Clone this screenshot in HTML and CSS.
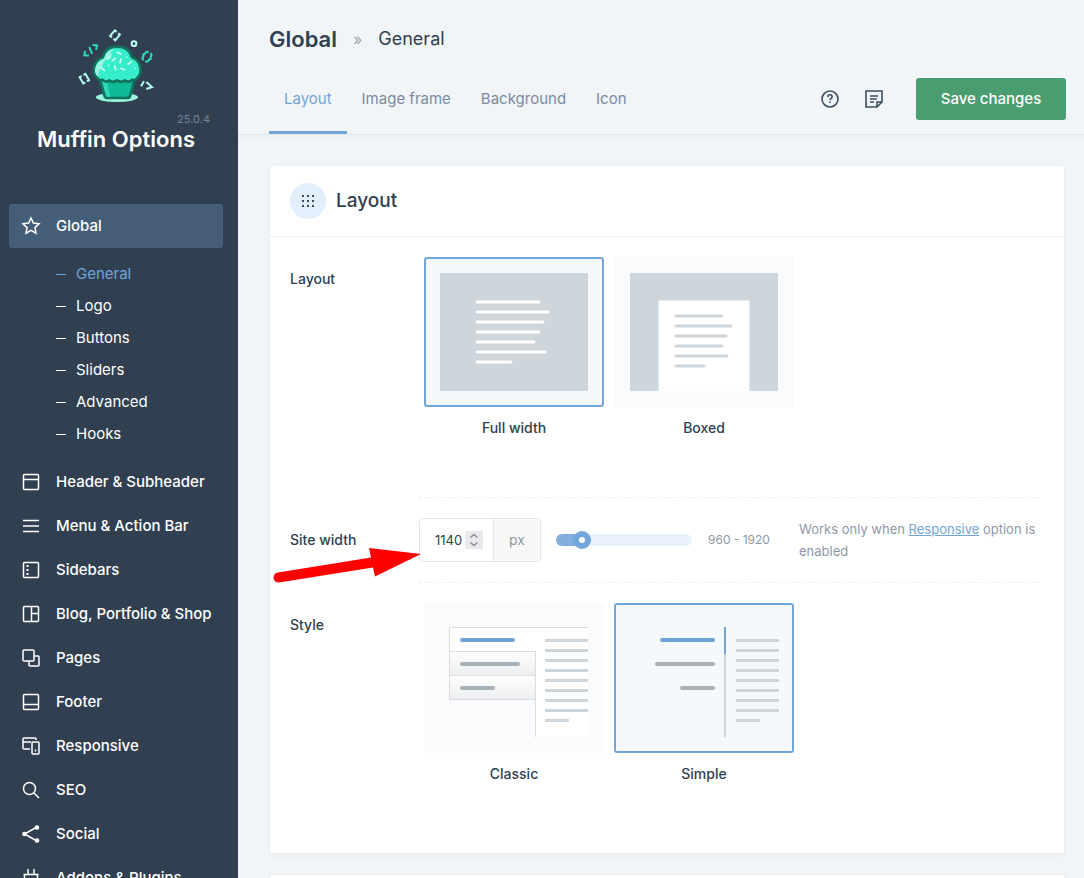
FILE: index.html
```html
<!DOCTYPE html>
<html lang="en">
<head>
<meta charset="utf-8">
<title>Muffin Options</title>
<link rel="stylesheet" href="styles.css">
</head>
<body>
<div class="app">
  <aside class="sidebar">
    <div class="brand">
      <svg class="brand-logo" viewBox="18 24 240 228" aria-hidden="true">
        <ellipse cx="141" cy="232" rx="63" ry="14" fill="#97f5e0"/>
        <path d="M89 172h106l-14 54q-2 8-10 8h-58q-8 0-10-8z" fill="#0eba98" stroke="#12705c" stroke-width="8" stroke-linejoin="round"/>
        <path d="M95 178h14l12 52h-11q-6-16-15-52z" fill="#2fd9b8"/>
        <path d="M84 176Q66 160 73 138 80 118 98 112 106 80 141 80 178 80 186 112 204 118 210 138 217 160 200 176 196 182 186 179 176 190 164 181 152 190 141 181 130 190 118 181 108 190 97 179 88 182 84 176z" fill="#36eecb" stroke="#12705c" stroke-width="8" stroke-linejoin="round"/>
        <path d="M86 172Q68 156 79 137 86 120 103 116 108 88 136 86 118 96 120 111 98 122 96 142 82 156 86 172z" fill="#98f7e3"/>
        <g stroke="#d3fff5" stroke-width="5" stroke-linecap="round">
          <path d="m141 97 12 5M112 117l9-6M127 122l9-7M153 117l-3 11M175 132l9-7M93 142l10 9M134 138l3 11M153 145l11 4M123 104h0M170 111h0M116 136h0M195 145h0"/>
        </g>
        <g fill="none" stroke="#b7fff0" stroke-width="6">
          <circle cx="192" cy="71" r="7"/>
          <path transform="translate(135 46) rotate(40)" d="M-3-11h-7v22h7M3-11h7v22h-7"/>
          <path transform="translate(43 176) rotate(-30)" d="M-3-11h-7v22h7M3-11h7v22h-7"/>
          <path d="m222 184-9 15M229 186l17 15-17 6"/>
        </g>
        <g fill="none" stroke="#2fdcbc" stroke-width="6">
          <path transform="translate(62 91) rotate(-38)" d="m-14-9-10 9 10 9M3-11l-6 22M14-9l10 9-10 9"/>
          <path transform="translate(231 110) rotate(32)" d="M-3-14q-7 0-7 7v3l-3 4 3 4v3q0 7 7 7M3-14q7 0 7 7v3l3 4-3 4v3q0 7-7 7"/>
        </g>
      </svg>
      <span class="brand-version">25.0.4</span>
      <strong class="brand-name">Muffin Options</strong>
    </div>
    <nav class="nav">
      <a class="nav-item is-active" href="#"><svg viewBox="0 0 18 18"><path d="m9 1 2.400 5.100 5.600.7-4.100 3.800 1.100 5.600L9 13.400l-5 2.800 1.100-5.600L1 6.800l5.600-.7z"/></svg>Global</a>
      <div class="subnav">
        <a class="subnav-item is-current" href="#">General</a>
        <a class="subnav-item" href="#">Logo</a>
        <a class="subnav-item" href="#">Buttons</a>
        <a class="subnav-item" href="#">Sliders</a>
        <a class="subnav-item" href="#">Advanced</a>
        <a class="subnav-item" href="#">Hooks</a>
      </div>
      <a class="nav-item" href="#"><svg viewBox="0 0 18 18"><rect x="1.500" y="1.500" width="15" height="15" rx="1"/><path d="M1.500 6.500h15"/></svg>Header &amp; Subheader</a>
      <a class="nav-item" href="#"><svg viewBox="0 0 18 18"><path d="M1 3.500h16M1 9h16M1 14.500h16"/></svg>Menu &amp; Action Bar</a>
      <a class="nav-item" href="#"><svg viewBox="0 0 18 18"><rect x="1.500" y="1.500" width="15" height="15" rx="1"/><path d="M5.500 4v10" stroke-width="2" stroke-dasharray="2 2"/></svg>Sidebars</a>
      <a class="nav-item" href="#"><svg viewBox="0 0 18 18"><rect x="1.500" y="1.500" width="15" height="15" rx="1"/><path d="M9.500 1.500v15M9.500 8.500h7"/></svg>Blog, Portfolio &amp; Shop</a>
      <a class="nav-item" href="#"><svg viewBox="0 0 18 18"><rect x="1" y="1" width="11" height="11" rx="1"/><path d="M12.500 7H16q1 0 1 1v8q0 1-1 1H8q-1 0-1-1v-4"/></svg>Pages</a>
      <a class="nav-item" href="#"><svg viewBox="0 0 18 18"><rect x="1.500" y="1.500" width="15" height="15" rx="1"/><path d="M1.500 11.500h15"/></svg>Footer</a>
      <a class="nav-item" href="#"><svg viewBox="0 0 18 18"><path d="M14 3V2q0-1-1-1H2Q1 1 1 2v9q0 1 1 1h6M1 5h8"/><rect x="10" y="5" width="7" height="12" rx="1"/><path d="M13.500 12.500v2"/></svg>Responsive</a>
      <a class="nav-item" href="#"><svg viewBox="0 0 18 18"><circle cx="7.500" cy="7.500" r="6"/><path d="m12 12 5 5"/></svg>SEO</a>
      <a class="nav-item" href="#"><svg viewBox="0 0 18 18"><path d="M15 2 2.500 9 15 16"/><g fill="currentColor"><circle cx="15" cy="2.500" r="1.600"/><circle cx="2.500" cy="9" r="1.600"/><circle cx="15" cy="15.500" r="1.600"/></g></svg>Social</a>
      <a class="nav-item" href="#"><svg viewBox="0 0 18 18"><path d="M6 0v5M12 0v5M1.500 5.500h15M2.500 5.500V12q0 3 3 3h7q3 0 3-3V5.500"/></svg>Addons &amp; Plugins</a>
    </nav>
  </aside>

  <main class="main">
    <header class="topbar">
      <div class="crumbs">
        <h1>Global</h1><span class="crumb-sep">»</span><span class="crumb">General</span>
      </div>
      <div class="toolbar">
        <nav class="tabs">
          <a class="tab is-active" href="#">Layout</a>
          <a class="tab" href="#">Image frame</a>
          <a class="tab" href="#">Background</a>
          <a class="tab" href="#">Icon</a>
        </nav>
        <div class="actions">
          <button class="icon-button" type="button" aria-label="Help"><svg viewBox="0 0 20 20"><circle cx="10" cy="10" r="8"/><path d="M7.900 8q0-2.200 2.100-2.200T12.100 8q0 1-1 1.500T10 11.200M10 12.500V14"/></svg></button>
          <button class="icon-button" type="button" aria-label="Notes"><svg viewBox="0 0 20 20"><path d="M2 2h16v11l-5 5H2zM18 13h-5v5"/><path d="M6 7h8M6 10h7M6 13h4"/></svg></button>
          <button class="save" type="button">Save changes</button>
        </div>
      </div>
    </header>

    <div class="content">
      <section class="card">
        <div class="card-head">
          <span class="card-icon"><svg viewBox="0 0 12 12"><path d="M0 1h12M0 6h12M0 11h12" stroke-dasharray="2 3"/></svg></span>
          <h2>Layout</h2>
        </div>

        <div class="row" role="radiogroup" aria-labelledby="layout-label">
          <span class="row-label" id="layout-label">Layout</span>
          <div class="options">
            <label class="option">
              <input type="radio" name="layout" checked>
              <span class="tile"><svg viewBox="0 0 148 118">
                <rect width="148" height="118" rx="1" fill="#ced5db"/>
                <path d="M37 29h62M37 39h71M37 49h66M37 59h62M37 69h57M37 79h68M37 89h34" stroke="#fff" stroke-width="3" stroke-linecap="round"/>
              </svg></span>
              <span class="option-name">Full width</span>
            </label>
            <label class="option">
              <input type="radio" name="layout">
              <span class="tile"><svg viewBox="0 0 148 118">
                <rect width="148" height="118" rx="1" fill="#ced5db"/>
                <path d="M28.500 118V27.500h91V118z" fill="#fff"/>
                <path d="M46 43h46M46 53h55M46 63h50M46 73h46M46 83h51M46 93h28" stroke="#ced5db" stroke-width="3" stroke-linecap="round"/>
              </svg></span>
              <span class="option-name">Boxed</span>
            </label>
          </div>
        </div>

        <div class="row row-width">
          <label class="row-label" for="site-width">Site width</label>
          <div class="width-control">
            <div class="field">
              <input id="site-width" type="number" value="1140">
              <svg class="stepper" viewBox="0 0 18 18" aria-hidden="true"><path d="m5.500 6.500 3.500-3 3.500 3M5.500 11.500l3.500 3 3.500-3"/></svg>
              <span class="unit">px</span>
            </div>
            <div class="slider"><input type="range" min="960" max="1920" value="1140" aria-label="Site width"></div>
            <span class="range-text">960 - 1920</span>
            <p class="hint">Works only when <a href="#">Responsive</a> option is enabled</p>
          </div>
          <svg class="pointer" viewBox="0 0 150 36" aria-hidden="true"><path d="M5 25.500 98 10.500 96 1l52 6-46 22.500-2-9L6 35.500a5 5 0 0 1-1-10z" fill="#fe0000"/></svg>
        </div>

        <div class="row" role="radiogroup" aria-labelledby="style-label">
          <span class="row-label" id="style-label">Style</span>
          <div class="options">
            <label class="option">
              <input type="radio" name="style">
              <span class="tile"><svg viewBox="0 0 148 118">
                <defs><linearGradient id="fade" x2="0" y2="1"><stop stop-color="#fff"/><stop offset="1" stop-color="#eceeef"/></linearGradient></defs>
                <path d="M9.500 8.500H148V118H95.500V32.500h-86z" fill="#fff"/>
                <rect x="9.500" y="32.500" width="86" height="24" fill="url(#fade)"/>
                <rect x="9.500" y="56.500" width="86" height="24" fill="url(#fade)"/>
                <path d="M148 8.500H9.500v72h86M9.500 32.500h86V118M9.500 56.500h86" fill="none" stroke="#dadee2"/>
                <g stroke-width="4" stroke-linecap="round"><path d="M22 21h51" stroke="#6fa3d8"/><path d="M22 45h56M22 69h31" stroke="#a9b1b8"/></g>
                <path d="M105 21.500h43M105 31.500h43M105 41.500h43M105 51.500h43M105 61.500h43M105 71.500h43M105 81.500h43M105 91.500h43M105 101.500h24" stroke="#ced5db" stroke-width="3"/>
              </svg></span>
              <span class="option-name">Classic</span>
            </label>
            <label class="option">
              <input type="radio" name="style" checked>
              <span class="tile"><svg viewBox="0 0 148 118">
                <g stroke-width="4" stroke-linecap="round"><path d="M32 21h51" stroke="#6fa3d8"/><path d="M27 45h56M52 69h31" stroke="#a9b1b8"/></g>
                <path d="M95 8v110" stroke="#ced5db" stroke-width="2"/><path d="M95 8v27" stroke="#6fa3d8" stroke-width="2"/>
                <path d="M106 21.500h43M106 31.500h43M106 41.500h43M106 51.500h43M106 61.500h43M106 71.500h43M106 81.500h43M106 91.500h43M106 101.500h24" stroke="#ced5db" stroke-width="3"/>
              </svg></span>
              <span class="option-name">Simple</span>
            </label>
          </div>
        </div>
      </section>
      <section class="card card-next"></section>
    </div>
  </main>
</div>
</body>
</html>
```
FILE: styles.css
```css
* {
  box-sizing: border-box;
}

body {
  margin: 0;
  font-family: Inter, "Open Sans", sans-serif;
  font-size: 14px;
  line-height: 22px;
  color: #304050;
  background: #f1f5f8;
}

h1,
h2,
p {
  margin: 0;
}

a {
  color: inherit;
  text-decoration: none;
}

button,
input {
  font: inherit;
  color: inherit;
}

.app {
  display: flex;
  height: 100vh;
  overflow: hidden;
}

/* Sidebar */
.sidebar {
  flex: 0 0 238px;
  overflow: hidden;
  color: #fff;
  background: #304050;
}

.brand {
  display: flex;
  flex-direction: column;
  align-items: center;
  height: 204px;
  padding: 28px 28px 0 22px;
}

.brand-logo {
  width: 80px;
  height: 76px;
}

.brand-version {
  align-self: flex-end;
  margin-top: 8px;
  font-size: 11px;
  line-height: 14px;
  color: #708499;
}

.brand-name {
  font-size: 22px;
  line-height: 26px;
  font-weight: 600;
  white-space: nowrap;
}

.nav {
  padding: 0 15px 0 9px;
  font-size: 15px;
}

.nav-item {
  display: flex;
  align-items: center;
  gap: 16px;
  height: 44px;
  padding: 0 13px;
  border-radius: 3px;
  font-weight: 500;
  white-space: nowrap;
}

.nav-item.is-active {
  background: #455e78;
}

.nav-item svg {
  flex: none;
  width: 18px;
  height: 18px;
  overflow: visible;
  fill: none;
  stroke: currentColor;
  stroke-width: 1.5;
}

.subnav {
  padding: 10px 0 10px 47px;
}

.subnav-item {
  display: flex;
  align-items: center;
  gap: 10px;
  height: 32px;
}

.subnav-item::before {
  content: "";
  width: 10px;
  height: 1px;
  background: currentColor;
}

.subnav-item.is-current {
  color: #72a5d8;
}

/* Top bar */
.main {
  flex: 1;
  min-width: 0;
  overflow: hidden;
}

.topbar {
  border-bottom: 1px solid #e3e8ec;
  box-shadow: 0 2px 4px rgba(48, 64, 80, 0.04);
}

.crumbs {
  display: flex;
  align-items: center;
  gap: 16px;
  height: 63px;
  padding: 15px 31px 0;
}

.crumbs h1 {
  font-size: 22px;
  font-weight: 600;
}

.crumb-sep {
  font-size: 16px;
  color: #9aa4b0;
}

.crumb {
  font-size: 18px;
}

.toolbar {
  display: flex;
  justify-content: space-between;
  height: 71px;
  padding: 0 18px 0 31px;
}

.tabs {
  display: flex;
  font-size: 15px;
}

.tab {
  display: flex;
  align-items: center;
  padding: 4px 15px 0;
  border-bottom: 3px solid transparent;
  border-radius: 2px 2px 0 0;
  color: #7a8aa3;
  white-space: nowrap;
}

.tab.is-active {
  color: #72a5d8;
  border-color: #72a5d8;
}

.actions {
  display: flex;
  align-items: center;
  gap: 24px;
}

.icon-button {
  width: 20px;
  height: 20px;
  padding: 0;
  border: 0;
  background: none;
}

.icon-button svg {
  display: block;
  fill: none;
  stroke: #3d4d5f;
  stroke-width: 1.6;
}

.save {
  width: 150px;
  height: 42px;
  margin-left: 8px;
  border: 0;
  border-radius: 3px;
  font-size: 15px;
  font-weight: 500;
  color: #fff;
  background: #4a9d6f;
}

/* Cards */
.content {
  padding: 30px 19px 0 31px;
}

.card {
  margin-bottom: 20px;
  padding-bottom: 10px;
  border: 1px solid #ebeff5;
  border-radius: 3px;
  background: #fff;
  box-shadow: 0 2px 4px rgba(48, 64, 80, 0.03);
}

.card-next {
  height: 100px;
}

.card-head {
  display: flex;
  align-items: center;
  gap: 10px;
  height: 71px;
  padding: 0 20px;
  border-bottom: 1px solid #e9edf5;
}

.card-head h2 {
  font-size: 19px;
  font-weight: 500;
}

.card-icon {
  display: grid;
  place-items: center;
  width: 36px;
  height: 36px;
  border-radius: 50%;
  background: #e2f0fe;
}

.card-icon svg {
  width: 12px;
  height: 12px;
  stroke: #3d4d5f;
  stroke-width: 2;
}

.row {
  position: relative;
  display: grid;
  grid-template-columns: 129px 1fr;
  padding: 0 24px 0 20px;
}

.row-label {
  padding-top: 31px;
  font-weight: 500;
}

.options {
  display: flex;
  flex-wrap: wrap;
  gap: 10px;
  padding: 20px 5px 58px;
}

.option {
  width: 180px;
  text-align: center;
}

.option input {
  position: absolute;
  opacity: 0;
}

.tile {
  display: block;
  height: 150px;
  padding: 14px;
  border: 2px solid #fafbfd;
  border-radius: 3px;
  background: #fafbfd;
}

.tile svg {
  display: block;
  overflow: visible;
  fill: none;
}

.option input:checked + .tile {
  border-color: #72a5d8;
  background: #f5f9fc;
}

.option-name {
  display: block;
  padding-top: 10px;
  font-weight: 500;
}

/* Site width */
.width-control {
  display: flex;
  align-items: center;
  height: 86px;
  border: dashed #edeff1;
  border-width: 1px 0;
}

.field {
  position: relative;
  display: flex;
  flex: 0 0 122px;
  height: 44px;
  border: 1px solid #e3e7ed;
  border-radius: 3px;
}

.field input {
  width: 73px;
  padding: 0 0 0 15px;
  border: 0;
  outline: 0;
  font-size: 13px;
  background: none;
  appearance: textfield;
}

.field input::-webkit-inner-spin-button {
  appearance: none;
}

.stepper {
  position: absolute;
  top: 12px;
  left: 45px;
  width: 18px;
  height: 18px;
  fill: none;
  stroke: #8b8c92;
  stroke-width: 1.5;
  background: #e9e9ed;
}

.unit {
  display: grid;
  flex: 1;
  place-items: center;
  border-left: 1px solid #e3e7ed;
  color: #8e98a3;
  background: #f8f8f9;
}

.slider {
  display: flex;
  flex: 0 0 136px;
  align-items: center;
  height: 12px;
  margin: 0 16px 0 15px;
  border-radius: 6px;
  background: linear-gradient(90deg, #82afde 19%, #e9f2fb 19%);
}

.slider input {
  flex: none;
  width: 154px;
  height: 18px;
  margin: 0 -9px;
  appearance: none;
  background: none;
}

.slider input::-webkit-slider-thumb {
  width: 18px;
  height: 18px;
  border: 6px solid #72a5d8;
  border-radius: 50%;
  appearance: none;
  background: #fff;
}

.range-text {
  flex: none;
  width: 61px;
  font-size: 12px;
  color: #8e98a3;
  white-space: nowrap;
}

.hint {
  flex: 1;
  margin-left: 30px;
  font-size: 13px;
  color: #8e98a3;
}

.hint a {
  color: #72a5d8;
  text-decoration: underline;
}

.row-width .row-label {
  align-self: center;
  padding: 0;
}

.pointer {
  position: absolute;
  top: 50px;
  left: 3px;
  width: 150px;
  height: 36px;
}
```
